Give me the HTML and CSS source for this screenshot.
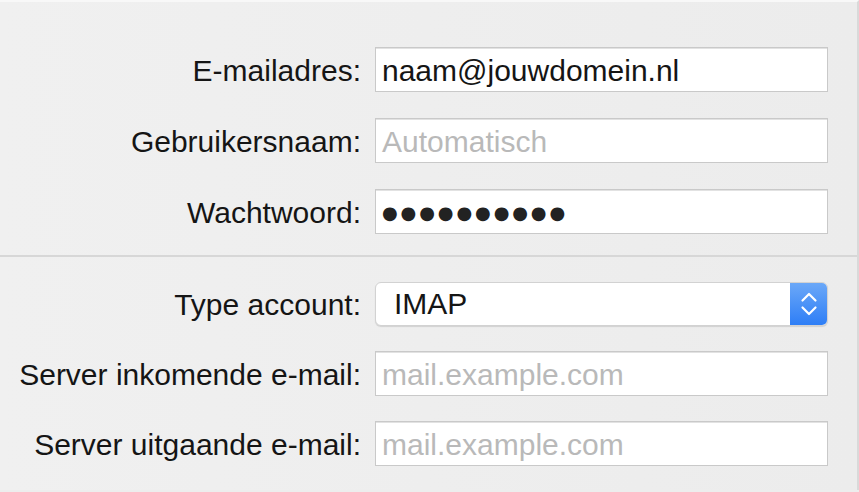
FILE: index.html
```html
<!DOCTYPE html>
<html lang="nl">
<head>
    <meta charset="UTF-8">
    <meta name="viewport" content="width=device-width, initial-scale=1.0">
    <title>Account toevoegen</title>
    <link rel="stylesheet" href="styles.css">
</head>
<body>
    <div class="panel">
        <div class="section first">
            <label class="label">E-mailadres:</label>
            <div class="field">naam@jouwdomein.nl</div>

            <label class="label">Gebruikersnaam:</label>
            <div class="field placeholder">Automatisch</div>

            <label class="label">Wachtwoord:</label>
            <div class="field password">●●●●●●●●●●</div>
        </div>

        <div class="divider"></div>

        <div class="section second">
            <label class="label">Type account:</label>
            <div class="select">
                <span class="select-value">IMAP</span>
                <span class="select-arrows">
                    <svg width="18" height="28" viewBox="0 0 18 28">
                        <path d="M2.5 10.5 L9 4 L15.5 10.5" fill="none" stroke="#fff" stroke-width="2.2" stroke-linecap="round" stroke-linejoin="round"/>
                        <path d="M2.5 17.5 L9 24 L15.5 17.5" fill="none" stroke="#fff" stroke-width="2.2" stroke-linecap="round" stroke-linejoin="round"/>
                    </svg>
                </span>
            </div>

            <label class="label">Server inkomende e-mail:</label>
            <div class="field placeholder">mail.example.com</div>

            <label class="label">Server uitgaande e-mail:</label>
            <div class="field placeholder">mail.example.com</div>
        </div>
    </div>
</body>
</html>
```

FILE: styles.css
```css
body {
    margin: 0;
    font-family: "Liberation Sans", Arial, sans-serif;
    background-color: #ededed;
    color: #151515;
    height: 492px;
    overflow: hidden;
}
.panel {
    border-top: 2px solid #f8f8f8;
    border-right: 2px solid #d9d9d9;
    height: 490px;
    box-sizing: border-box;
    background: linear-gradient(to right, #f0f0f0, #ececec);
}
.section {
    display: grid;
    grid-template-columns: 361px 453px;
    grid-auto-rows: 45px;
    column-gap: 14px;
    align-items: center;
}
.section.first {
    padding-top: 45px;
    row-gap: 26px;
}
.section.second {
    padding-top: 24px;
    row-gap: 25px;
}
.label {
    text-align: right;
    font-size: 30px;
    padding-top: 3px;
}
.field {
    height: 45px;
    box-sizing: border-box;
    background-color: #fff;
    border: 1px solid #c9c9c9;
    box-shadow: inset 0 1px 0 #e2e2e2;
    padding-left: 6px;
    font-size: 30px;
    line-height: 46px;
    white-space: nowrap;
    overflow: hidden;
}
.placeholder {
    color: #b9b9b9;
}
.password {
    font-family: "DejaVu Sans", sans-serif;
    font-size: 18px;
    letter-spacing: 2.9px;
    color: #222;
}
.divider {
    height: 2px;
    background-color: #d7d7d7;
    margin-top: 21px;
}
.select {
    height: 44px;
    box-sizing: border-box;
    display: flex;
    background-color: #fff;
    border: 1px solid #d2d2d2;
    border-radius: 6px;
    box-shadow: 0 1px 1px rgba(0, 0, 0, 0.12);
    overflow: hidden;
}
.select-value {
    flex: 1;
    padding-left: 18px;
    font-size: 30px;
    line-height: 42px;
}
.select-arrows {
    width: 37px;
    display: flex;
    align-items: center;
    justify-content: center;
    background: linear-gradient(to bottom, #6ba8f8, #2e7ef6);
}
```
